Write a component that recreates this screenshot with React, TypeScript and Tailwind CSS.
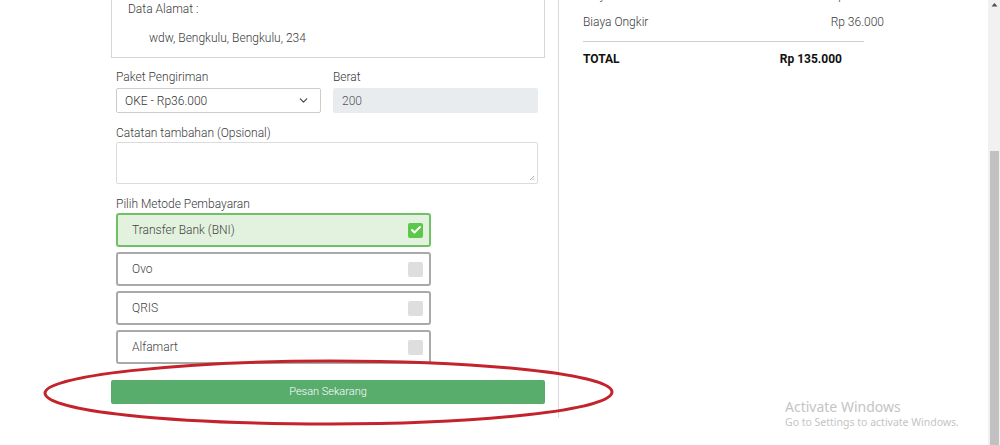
import { ChevronDown, Check } from 'lucide-react';

const methods = [
  { label: 'Transfer Bank (BNI)', active: true },
  { label: 'Ovo', active: false },
  { label: 'QRIS', active: false },
  { label: 'Alfamart', active: false },
];

function PaymentOption({ label, active }: { label: string; active: boolean }) {
  return (
    <div
      className={`h-[34px] w-[315px] flex items-center justify-between pl-[14px] pr-[6px] rounded-[3px] border-2 ${
        active ? 'bg-[#e3f2de] border-[#72c066]' : 'bg-white border-[#a9a9a9]'
      }`}
    >
      <span className="text-[12px] text-[#444]">{label}</span>
      {active ? (
        <span className="w-[15px] h-[15px] rounded-[2px] bg-[#5cc84b] flex items-center justify-center">
          <Check className="w-[12px] h-[12px] text-white" strokeWidth={4} />
        </span>
      ) : (
        <span className="w-[15px] h-[15px] rounded-[2px] bg-[#dedede]" />
      )}
    </div>
  );
}

export default function App() {
  return (
    <div className="relative w-[1000px] h-[445px] overflow-hidden bg-white flex font-['Roboto',sans-serif] font-light text-[12px] text-[#3a3a3a]">
      <div className="flex-1 flex">
        {/* Form column */}
        <div className="ml-[111px] w-[448px] h-[418px] border-r border-[#d9d9d9] flex flex-col">
          <div className="w-[434px] h-[58px] border border-t-0 border-[#d6d6d6] pl-[16px] pt-[1px] leading-[16px]">
            <p>Data Alamat :</p>
            <p className="mt-[13px] pl-[21px]">wdw, Bengkulu, Bengkulu, 234</p>
          </div>

          <div className="ml-[5px] w-[422px] leading-[16px]">
            <div className="grid grid-cols-2 gap-x-[12px] mt-[11px]">
              <div>
                <label>Paket Pengiriman</label>
                <div className="mt-[3px] h-[25px] border border-[#ccc] rounded-[2px] flex items-center justify-between pl-[8px] pr-[10px] text-[#333]">
                  <span>OKE - Rp36.000</span>
                  <ChevronDown className="w-[13px] h-[13px] text-[#444]" strokeWidth={2} />
                </div>
              </div>
              <div>
                <label>Berat</label>
                <div className="mt-[3px] h-[25px] bg-[#e9ecef] rounded-[2px] flex items-center pl-[9px] text-[#555]">200</div>
              </div>
            </div>

            <label className="block mt-[12px]">Catatan tambahan (Opsional)</label>
            <div className="relative mt-[1px] h-[42px] border border-[#dcdcdc] rounded-[2px]">
              <svg className="absolute right-[2px] bottom-[2px]" width="6" height="6" viewBox="0 0 6 6">
                <path d="M1 5 L5 1 M3.5 5 L5 3.5" stroke="#999" strokeWidth="0.8" />
              </svg>
            </div>

            <label className="block mt-[12px]">Pilih Metode Pembayaran</label>
            <div className="mt-[1px] flex flex-col gap-[5px]">
              {methods.map((m) => (
                <PaymentOption key={m.label} label={m.label} active={m.active} />
              ))}
            </div>
          </div>

          <button className="mt-[16px] w-[434px] h-[24px] bg-[#58ac6c] rounded-[2px] text-white text-[11px]">
            Pesan Sekarang
          </button>
        </div>

        {/* Summary column */}
        <div className="pl-[24px] leading-[16px]">
          <div className="-mt-[13px] w-[301px] flex justify-between">
            <span>Biaya Produk</span>
            <span>Rp 99.000</span>
          </div>
          <div className="mt-[11px] w-[301px] flex justify-between">
            <span>Biaya Ongkir</span>
            <span>Rp 36.000</span>
          </div>
          <div className="mt-[11px] w-[281px] border-t border-[#cfcfcf]" />
          <div className="mt-[9px] w-[259px] flex justify-between font-bold text-[#111]">
            <span>TOTAL</span>
            <span>Rp 135.000</span>
          </div>
        </div>
      </div>

      {/* Scrollbar */}
      <div className="w-[12px] h-[445px] bg-[#f1f1f1] flex flex-col items-center">
        <svg className="mt-[2px]" width="7" height="5" viewBox="0 0 7 5">
          <path d="M0.5 4.5 L3.5 1 L6.5 4.5 Z" fill="#505050" />
        </svg>
        <div className="mt-[144px] w-[9px] flex-1 bg-[#c1c1c1]" />
      </div>

      {/* Red highlight ellipse */}
      <svg className="absolute left-0 top-0 pointer-events-none" width="1000" height="445">
        <path
          d="M330 361 C480 361 612 374 612 392 C612 410 480 424 330 424 C170 424 45 411 45 393 C45 376 180 361 330 361 Z"
          fill="none"
          stroke="#c4232c"
          strokeWidth="3"
        />
      </svg>

      {/* Windows watermark */}
      <div className="absolute left-[785px] top-[398px] font-['Noto_Sans',sans-serif] font-normal text-[#c4c4c4] leading-tight">
        <p className="text-[14px]">Activate Windows</p>
        <p className="text-[10.5px]">Go to Settings to activate Windows.</p>
      </div>
    </div>
  );
}
